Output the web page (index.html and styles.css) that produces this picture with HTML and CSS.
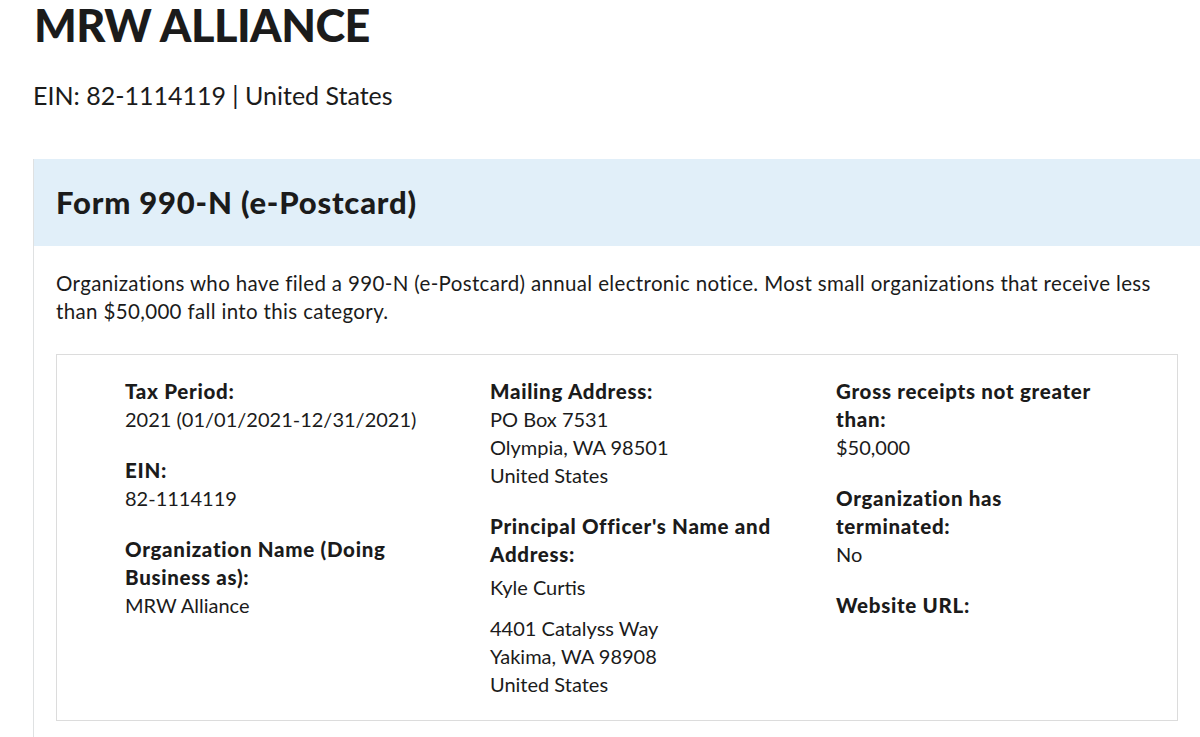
FILE: index.html
```html
<!DOCTYPE html>
<html lang="en">
<head>
<meta charset="utf-8">
<title>MRW ALLIANCE</title>
<link rel="stylesheet" href="styles.css">
</head>
<body>
<main class="page">
  <h1 class="org-name">MRW ALLIANCE</h1>
  <p class="org-meta">EIN: 82-1114119 | United States</p>

  <section class="panel">
    <header class="panel-head">
      <h2>Form 990-N (e-Postcard)</h2>
    </header>
    <div class="panel-body">
      <p class="intro">Organizations who have filed a 990-N (e-Postcard) annual electronic notice. Most small organizations that receive less than $50,000 fall into this category.</p>

      <div class="filing">
        <div class="col col-1">
          <div class="item">
            <h3 class="label">Tax Period:</h3>
            <p>2021 (01/01/2021-12/31/2021)</p>
          </div>
          <div class="item">
            <h3 class="label">EIN:</h3>
            <p>82-1114119</p>
          </div>
          <div class="item">
            <h3 class="label">Organization Name (Doing Business as):</h3>
            <p>MRW Alliance</p>
          </div>
        </div>
        <div class="col col-2">
          <div class="item">
            <h3 class="label">Mailing Address:</h3>
            <p>PO Box 7531<br>Olympia, WA 98501<br>United States</p>
          </div>
          <div class="item">
            <h3 class="label">Principal Officer's Name and Address:</h3>
            <p class="officer">Kyle Curtis</p>
            <p class="officer-addr">4401 Catalyss Way<br>Yakima, WA 98908<br>United States</p>
          </div>
        </div>
        <div class="col col-3">
          <div class="item">
            <h3 class="label">Gross receipts not greater than:</h3>
            <p>$50,000</p>
          </div>
          <div class="item">
            <h3 class="label">Organization has terminated:</h3>
            <p>No</p>
          </div>
          <div class="item">
            <h3 class="label">Website URL:</h3>
          </div>
        </div>
      </div>
    </div>
  </section>
</main>
</body>
</html>
```

FILE: styles.css
```css
html, body {
  margin: 0;
  padding: 0;
  background: #ffffff;
  overflow-x: hidden;
}

body {
  font-family: Lato, "Open Sans", "Liberation Sans", sans-serif;
  color: #1b1b1b;
  font-size: 20px;
  line-height: 28px;
}

.page {
  padding: 0 0 0 33px;
}

.org-name {
  margin: 0 0 0 1px;
  font-size: 45px;
  line-height: 50px;
  font-weight: 900;
  letter-spacing: -0.5px;
}

.org-meta {
  margin: 30px 0 0 0;
  font-size: 25px;
  line-height: 30px;
}

.panel {
  margin-top: 49px;
  border-left: 1px solid #dfe1e2;
}

.panel-head {
  background: #e1eff9;
  padding: 25px 22px 26px 22px;
}

.panel-head h2 {
  margin: 0;
  font-size: 31px;
  line-height: 36px;
  font-weight: 900;
  letter-spacing: 0.8px;
}

.panel-body {
  padding: 23px 22px 20px 22px;
}

.intro {
  margin: 0 0 29px 0;
  font-size: 20.5px;
  letter-spacing: 0.35px;
}

.filing {
  border: 1px solid #dcdcdc;
  padding: 22px 0 22px 68px;
  display: grid;
  grid-template-columns: 365px 346px 1fr;
}

.col {
  display: flex;
  flex-direction: column;
  gap: 23px;
}

.col-1, .col-2 {
  max-width: 300px;
}

.col-3 {
  max-width: 266px;
}

.item p {
  margin: 0;
}

.label {
  margin: 0;
  font-size: 20.5px;
  line-height: 28px;
  font-weight: 900;
  letter-spacing: 0.7px;
}

.item .officer {
  margin-top: 5px;
}

.item .officer-addr {
  margin-top: 13px;
}
```
